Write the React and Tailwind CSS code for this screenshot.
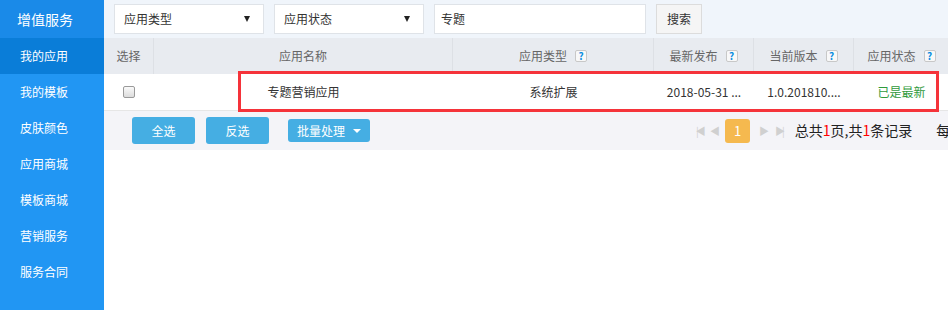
import React from "react";

const font = { fontFamily: '"Microsoft YaHei", "Noto Sans CJK SC", "Noto Sans", sans-serif' };

function Help() {
  return (
    <span className="inline-flex items-center justify-center w-[12px] h-[12px] ml-[8px] border border-[#c8c8c8] bg-[#f8f8f8] rounded-[2px] text-[#0b8de0] text-[10px] font-bold leading-none">
      ?
    </span>
  );
}

function Select({ label, className }) {
  return (
    <div className={"h-[30px] shrink-0 bg-white border border-[#dfe3e8] flex items-center justify-between pl-[9px] pr-[13px] text-[12px] text-[#333] " + className}>
      <span>{label}</span>
      <span className="w-0 h-0 border-l-[3px] border-r-[3px] border-t-[6px] border-l-transparent border-r-transparent border-t-[#222]" />
    </div>
  );
}

const menu = ["我的应用", "我的模板", "皮肤颜色", "应用商城", "模板商城", "营销服务", "服务合同"];

export default function App() {
  return (
    <div className="flex w-[948px] h-[310px] overflow-hidden bg-white" style={font}>
      {/* 侧边栏 */}
      <div className="w-[104px] shrink-0 bg-[#2196f3] text-white">
        <div className="h-[38px] bg-[#1a8ae8] flex items-center pl-[17px] text-[14px]">增值服务</div>
        {menu.map((m, i) => (
          <div key={m} className={"h-[36px] flex items-center pl-[20px] text-[12px] " + (i === 0 ? "bg-[#0a7dd8]" : "")}>
            {m}
          </div>
        ))}
      </div>

      {/* 主体 */}
      <div className="flex-1 min-w-0 relative overflow-hidden">
        <div className="h-[38px] bg-[#f0f5fb] flex items-center pl-[10px]">
          <Select label="应用类型" className="w-[150px]" />
          <Select label="应用状态" className="w-[150px] ml-[10px]" />
          <div className="w-[212px] h-[30px] shrink-0 ml-[10px] bg-white border border-[#dfe3e8] flex items-center pl-[6px] text-[12px] text-[#333]">专题</div>
          <div className="w-[46px] h-[30px] shrink-0 ml-[10px] bg-[#f5f5f5] border border-[#dcdcdc] flex items-center justify-center text-[12px] text-[#333]">搜索</div>
        </div>

        <div className="w-[860px]">
          <div className="flex h-[36px] bg-[#e8ebf0] text-[12px] text-[#666]">
            <div className="w-[50px] flex items-center justify-center border-r border-[#dde0e5]">选择</div>
            <div className="w-[299px] flex items-center justify-center border-r border-[#dde0e5]">应用名称</div>
            <div className="w-[201px] flex items-center justify-center border-r border-[#dde0e5]">应用类型<Help /></div>
            <div className="w-[100px] flex items-center justify-center border-r border-[#dde0e5]">最新发布<Help /></div>
            <div className="w-[100px] flex items-center justify-center border-r border-[#dde0e5]">当前版本<Help /></div>
            <div className="w-[95px] flex items-center justify-center">应用状态<Help /></div>
          </div>
          <div className="flex h-[37px] bg-white text-[12px] text-[#333] border-b border-[#e6e6e6]">
            <div className="w-[50px] flex items-center justify-center">
              <span className="w-[12px] h-[12px] rounded-[2px] border border-[#9a9a9a] bg-gradient-to-b from-[#fafafa] to-[#dcdcdc]" />
            </div>
            <div className="w-[299px] flex items-center justify-center">专题营销应用</div>
            <div className="w-[201px] flex items-center justify-center">系统扩展</div>
            <div className="w-[100px] flex items-center justify-center">2018-05-31 ...</div>
            <div className="w-[100px] flex items-center justify-center">1.0.201810....</div>
            <div className="w-[95px] flex items-center justify-center text-[#2f9a3c]">已是最新</div>
          </div>
        </div>

        <div className="h-[39px] bg-[#f4f4f8] flex items-center pl-[28px] text-[12px]">
          <div className="w-[63px] h-[27px] shrink-0 rounded-[3px] bg-[#45aee3] text-white flex items-center justify-center">全选</div>
          <div className="w-[63px] h-[27px] shrink-0 ml-[11px] rounded-[3px] bg-[#45aee3] text-white flex items-center justify-center">反选</div>
          <div className="w-[82px] h-[23px] shrink-0 ml-[19px] rounded-[3px] bg-[#45aee3] text-white flex items-center justify-center">
            批量处理
            <span className="ml-[8px] w-0 h-0 border-l-[4px] border-r-[4px] border-t-[4px] border-l-transparent border-r-transparent border-t-white" />
          </div>
          <div className="flex shrink-0 items-center ml-[326px] text-[#d0d0d0] text-[10px]">
            <span className="tracking-[-3px]">|◀</span>
            <span className="ml-[7px]">◀</span>
            <span className="w-[25px] h-[24px] ml-[5px] rounded-[3px] bg-[#f5b94f] text-white text-[13px] flex items-center justify-center">1</span>
            <span className="ml-[9px]">▶</span>
            <span className="ml-[6px] tracking-[-3px]">▶|</span>
          </div>
          <div className="ml-[13px] shrink-0 text-[14px] text-[#222] whitespace-nowrap">
            总共<span className="text-[#f00]">1</span>页,共<span className="text-[#f00]">1</span>条记录
            <span className="ml-[24px]">每页</span>
          </div>
        </div>

        {/* 标注框 */}
        <div className="absolute left-[134px] top-[71px] w-[701px] h-[41px] border-[3px] border-[#f5333a]" />
      </div>
    </div>
  );
}
